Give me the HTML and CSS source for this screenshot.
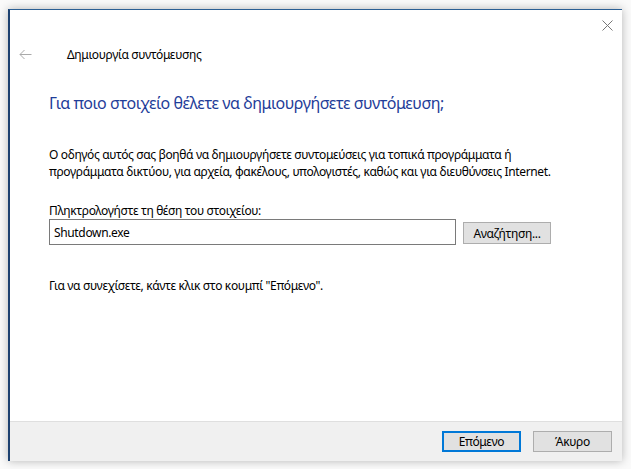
FILE: index.html
```html
<!DOCTYPE html>
<html lang="el">
<head>
  <meta charset="UTF-8">
  <title>Δημιουργία συντόμευσης</title>
  <link rel="stylesheet" href="styles.css">
</head>
<body>
  <div class="window">
    <!-- Title bar with close button -->
    <div class="titlebar">
      <span class="close">
        <svg width="11" height="11" viewBox="0 0 11 11"><path d="M0.5 0.5 L10.5 10.5 M10.5 0.5 L0.5 10.5" stroke="#777" stroke-width="1" fill="none"/></svg>
      </span>
    </div>

    <div class="nav">
      <span class="back">
        <svg width="13" height="11" viewBox="0 0 13 11"><path d="M12.5 5.5 H1 M5.5 1 L1 5.5 L5.5 10" stroke="#aaa" stroke-width="1" fill="none"/></svg>
      </span>
      <span class="nav-title">Δημιουργία συντόμευσης</span>
    </div>

    <div class="content">
      <h1>Για ποιο στοιχείο θέλετε να δημιουργήσετε συντόμευση;</h1>
      <p class="intro">Ο οδηγός αυτός σας βοηθά να δημιουργήσετε συντομεύσεις για τοπικά προγράμματα ή<br>προγράμματα δικτύου, για αρχεία, φακέλους, υπολογιστές, καθώς και για διευθύνσεις Internet.</p>
      <label class="field-label" for="location">Πληκτρολογήστε τη θέση του στοιχείου:</label>
      <div class="path-row">
        <input id="location" class="path-input" type="text" value="Shutdown.exe">
        <button class="btn browse">Αναζήτηση...</button>
      </div>
      <p class="hint">Για να συνεχίσετε, κάντε κλικ στο κουμπί "Επόμενο".</p>
    </div>

    <!-- Bottom buttons -->
    <div class="footer">
      <button class="btn primary">Επόμενο</button>
      <button class="btn">Άκυρο</button>
    </div>
  </div>
</body>
</html>
```

FILE: styles.css
```css
body {
  margin: 0;
  padding: 9px 8px 8px 8px;
  background: #fafafa;
  font-family: 'Noto Sans', 'Liberation Sans', sans-serif;
  font-size: 12px;
  letter-spacing: -0.35px;
  color: #000;
}

.window {
  width: 614px;
  height: 452px;
  box-sizing: border-box;
  background: #fff;
  border-top: 1px solid #2b5f94;
  border-left: 2px solid #1d4170;
  box-shadow: 0 0 9px rgba(0, 0, 0, 0.28);
  display: flex;
  flex-direction: column;
}

.titlebar {
  height: 21px;
  display: flex;
  justify-content: flex-end;
  align-items: flex-end;
  padding-right: 9px;
}

.close {
  display: flex;
  width: 11px;
  height: 11px;
}

.nav {
  display: flex;
  align-items: center;
  height: 30px;
  margin-top: 8px;
  padding-left: 9px;
}

.back {
  display: flex;
  width: 13px;
  margin-right: 35px;
}

.nav-title {
  font-size: 12px;
}

.content {
  flex: 1;
  padding-left: 39px;
}

h1 {
  margin: 23px 0 0 0;
  font-size: 16px;
  font-weight: normal;
  letter-spacing: -0.45px;
  color: #1f3d99;
  line-height: 22px;
}

.intro {
  margin: 32px 0 0 0;
  line-height: 17px;
}

.field-label {
  display: block;
  margin-top: 22px;
  line-height: 17px;
}

.path-row {
  display: flex;
  align-items: flex-start;
  margin-top: 0;
}

.path-input {
  width: 407px;
  height: 26px;
  box-sizing: border-box;
  border: 1px solid #7a7a7a;
  padding: 0 4px;
  font-family: inherit;
  font-size: 12px;
  letter-spacing: -0.35px;
  color: #000;
  outline: none;
}

.btn {
  height: 22px;
  box-sizing: border-box;
  padding: 0 6px;
  border: 1px solid #adadad;
  background: #e1e1e1;
  font-family: inherit;
  font-size: 12px;
  letter-spacing: -0.35px;
  color: #000;
}

.browse {
  margin-left: 7px;
  margin-top: 3px;
  width: 88px;
}

.hint {
  margin: 32px 0 0 0;
  line-height: 17px;
}

.footer {
  height: 40px;
  box-sizing: border-box;
  background: #f0f0f0;
  border-top: 1px solid #dfdfdf;
  display: flex;
  justify-content: flex-end;
  align-items: center;
  gap: 12px;
  padding-right: 10px;
}

.footer .btn {
  width: 79px;
  height: 21px;
}

.primary {
  border: 2px solid #0078d7;
}
```
